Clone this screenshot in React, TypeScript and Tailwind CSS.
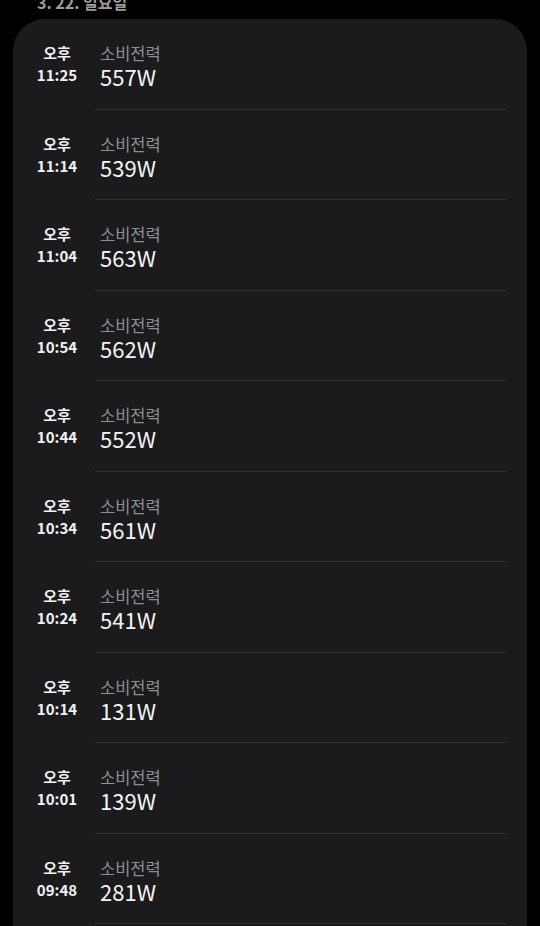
const entries = [
  { time: "11:25", watt: "557W" },
  { time: "11:14", watt: "539W" },
  { time: "11:04", watt: "563W" },
  { time: "10:54", watt: "562W" },
  { time: "10:44", watt: "552W" },
  { time: "10:34", watt: "561W" },
  { time: "10:24", watt: "541W" },
  { time: "10:14", watt: "131W" },
  { time: "10:01", watt: "139W" },
  { time: "09:48", watt: "281W" },
];

function LogRow({ time, watt }: { time: string; watt: string }) {
  return (
    <div className="flex h-[90.5px] shrink-0">
      {/* time column */}
      <div className="flex w-[82px] shrink-0 flex-col items-center pl-[6px] pt-[24px]">
        <span className="block text-[15px] font-bold leading-[20px] text-[#f2f2f2]">오후</span>
        <span className="block text-[15px] font-bold leading-[24px] text-[#f2f2f2]">{time}</span>
      </div>

      {/* value column */}
      <div className="mr-[21px] flex flex-1 flex-col border-b border-[#333335] pl-[5px] pt-[24px]">
        <span className="block text-[16.5px] leading-[20px] text-[#8f8f91]">소비전력</span>
        <span className="block text-[22px] leading-[26px] text-[#f4f4f4]">{watt}</span>
      </div>
    </div>
  );
}

export default function App() {
  return (
    <div
      className="h-[926px] w-full overflow-hidden bg-black px-[13px]"
      style={{ fontFamily: '"Noto Sans CJK KR", "Noto Sans", sans-serif' }}
    >
      <div className="-mt-[8px] h-[20px] pl-[24px] text-[16px] font-bold leading-[20px] text-[#9c9c9e]">
        3. 22. 일요일
      </div>

      <div className="mt-[7px] flex flex-col rounded-[32px] bg-[#1b1b1d] pb-[40px]">
        {entries.map((e) => (
          <LogRow key={e.time} time={e.time} watt={e.watt} />
        ))}
      </div>
    </div>
  );
}
